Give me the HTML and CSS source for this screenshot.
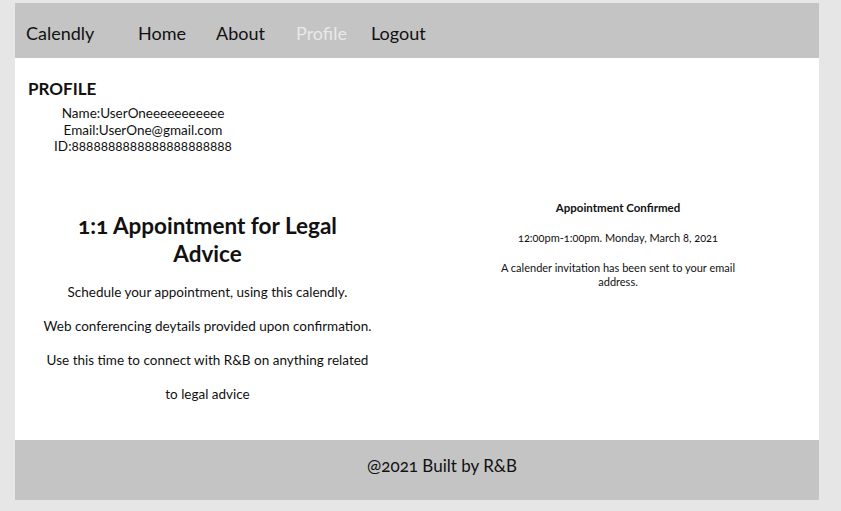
FILE: index.html
```html
<!DOCTYPE html>
<html>
<head>
<meta charset="utf-8">
<link rel="stylesheet" href="styles.css">
</head>
<body>
<div class="page">
  <header class="nav">
    <span class="brand">Calendly</span>
    <nav class="links">
      <a class="link home">Home</a>
      <a class="link about">About</a>
      <a class="link profile-link active">Profile</a>
      <a class="link">Logout</a>
    </nav>
  </header>
  <main class="main">
    <section class="profile">
      <h2 class="profile-title">PROFILE</h2>
      <div class="profile-info">
        <div>Name:UserOneeeeeeeeeee</div>
        <div>Email:UserOne@gmail.com</div>
        <div>ID:8888888888888888888888</div>
      </div>
    </section>
    <section class="columns">
      <div class="left">
        <h1 class="title">1:1 Appointment for Legal Advice</h1>
        <p class="para">Schedule your appointment, using this calendly.</p>
        <p class="para">Web conferencing deytails provided upon confirmation.</p>
        <p class="para">Use this time to connect with R&amp;B on anything related</p>
        <p class="para">to legal advice</p>
      </div>
      <div class="right">
        <h3 class="confirm">Appointment Confirmed</h3>
        <p class="small">12:00pm-1:00pm. Monday, March 8, 2021</p>
        <p class="small">A calender invitation has been sent to your email address.</p>
      </div>
    </section>
  </main>
  <footer class="footer">@2021 Built by R&amp;B</footer>
</div>
</body>
</html>
```
FILE: styles.css
```css
html, body {
  margin: 0;
  padding: 0;
}
body {
  background: #e6e6e6;
  font-family: Lato, "Open Sans", sans-serif;
  font-variant-numeric: oldstyle-nums;
  color: #111;
}
.page {
  width: 804px;
  margin: 3px 0 0 15px;
  display: flex;
  flex-direction: column;
}
.nav {
  height: 55px;
  box-sizing: border-box;
  padding: 4px 0 0 11px;
  background: #c4c4c4;
  display: flex;
  align-items: center;
  font-size: 18px;
}
.brand {
  width: 112px;
}
.links {
  display: flex;
}
.link {
  color: #111;
}
.home {
  width: 78px;
}
.about {
  width: 80px;
}
.profile-link {
  width: 75px;
}
.active {
  color: #e9e9e9;
}
.main {
  height: 382px;
  background: #fff;
  display: flex;
  flex-direction: column;
}
.profile {
  padding: 20px 0 0 13px;
}
.profile-title {
  margin: 0;
  font-size: 17px;
  font-weight: 700;
  line-height: 22px;
}
.profile-info {
  width: 230px;
  text-align: center;
  font-size: 13.5px;
  line-height: 16.5px;
  margin-top: 5px;
}
.columns {
  display: flex;
  margin-top: 45px;
}
.left {
  width: 385px;
  text-align: center;
  padding-top: 12px;
}
.title {
  margin: 0 auto 7px;
  width: 300px;
  font-size: 22.5px;
  line-height: 28px;
  font-weight: 700;
}
.para {
  margin: 0;
  font-size: 13.5px;
  line-height: 34px;
}
.right {
  width: 260px;
  margin-left: 88px;
  text-align: center;
}
.confirm {
  margin: 0 0 15px;
  font-size: 11.5px;
  font-weight: 700;
  line-height: 16px;
}
.small {
  margin: 0 0 16px;
  font-size: 11px;
  line-height: 14px;
}
.footer {
  height: 60px;
  background: #c4c4c4;
  display: flex;
  align-items: center;
  justify-content: center;
  font-size: 17px;
  padding: 0 0 10px 50px;
  box-sizing: border-box;
}
```
